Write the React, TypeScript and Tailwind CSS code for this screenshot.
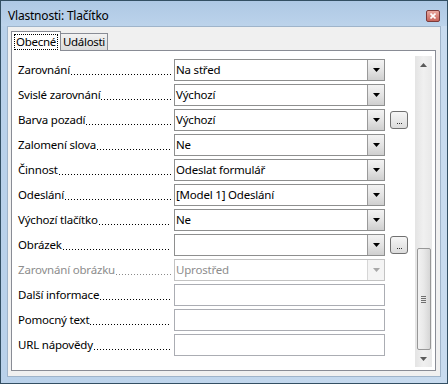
import React from 'react';

const font = { fontFamily: '"Segoe UI", "Noto Sans", "Open Sans", sans-serif' };

interface RowProps {
  label: string;
  kind: 'combo' | 'text';
  value?: string;
  disabled?: boolean;
  more?: boolean;
}

const rows: RowProps[] = [
  { label: 'Zarovnání', kind: 'combo', value: 'Na střed' },
  { label: 'Svislé zarovnání', kind: 'combo', value: 'Výchozí' },
  { label: 'Barva pozadí', kind: 'combo', value: 'Výchozí', more: true },
  { label: 'Zalomení slova', kind: 'combo', value: 'Ne' },
  { label: 'Činnost', kind: 'combo', value: 'Odeslat formulář' },
  { label: 'Odeslání', kind: 'combo', value: '[Model 1] Odeslání' },
  { label: 'Výchozí tlačítko', kind: 'combo', value: 'Ne' },
  { label: 'Obrázek', kind: 'combo', value: '', more: true },
  { label: 'Zarovnání obrázku', kind: 'combo', value: 'Uprostřed', disabled: true },
  { label: 'Další informace', kind: 'text' },
  { label: 'Pomocný text', kind: 'text' },
  { label: 'URL nápovědy', kind: 'text' },
];

function Arrow({ disabled }: { disabled?: boolean }) {
  return (
    <svg width="7" height="4" viewBox="0 0 7 4">
      <path d="M0 0 H7 L3.5 4 Z" fill={disabled ? '#a8a8a8' : '#000'} />
    </svg>
  );
}

function Row({ label, kind, value, disabled, more }: RowProps) {
  return (
    <div className="flex items-center h-[22px]">
      <div
        className={`w-[156px] pr-[3px] flex items-end text-[11.5px] tracking-[-0.2px] leading-[22px] whitespace-nowrap ${
          disabled ? 'text-[#8d8d8d]' : 'text-black'
        }`}
      >
        <span>{label}</span>
        {/* dot leader */}
        <div
          className={`flex-1 h-[1px] mb-[6px] ml-[1px] bg-repeat-x bg-[length:3px_1px] ${
            disabled
              ? 'bg-[linear-gradient(to_right,#8a8a8a_1px,transparent_1px)]'
              : 'bg-[linear-gradient(to_right,#000_1px,transparent_1px)]'
          }`}
        />
      </div>
      {kind === 'combo' ? (
        <div
          className={`w-[211px] h-[22px] flex items-center bg-white border ${
            disabled ? 'border-[#c3c3c3]' : 'border-[#8e8f8f]'
          }`}
        >
          <div
            className={`flex-1 pl-[1px] text-[11.5px] tracking-[-0.2px] leading-[20px] whitespace-nowrap ${
              disabled ? 'text-[#8d8d8d]' : 'text-black'
            }`}
          >
            {value}
          </div>
          <div
            className={`w-[17px] h-[20px] flex items-center justify-center border-l ${
              disabled
                ? 'border-[#d6d6d6] bg-[#f4f4f4]'
                : 'border-[#9a9a9a] bg-gradient-to-b from-[#f3f3f3] via-[#e4e4e4] to-[#cfcfcf]'
            }`}
          >
            <Arrow disabled={disabled} />
          </div>
        </div>
      ) : (
        <div className="w-[211px] h-[22px] bg-white border border-[#abadb3]" />
      )}
      {more && (
        <div className="ml-[5px] w-[18px] h-[18px] rounded-[3px] border border-[#707070] bg-gradient-to-b from-[#f6f6f6] to-[#dcdcdc] flex items-end justify-center pb-[4px]">
          <div className="flex gap-[1px]">
            <div className="w-[1px] h-[1px] bg-[#333]" />
            <div className="w-[1px] h-[1px] bg-[#333]" />
            <div className="w-[1px] h-[1px] bg-[#333]" />
          </div>
        </div>
      )}
    </div>
  );
}

function ScrollBar() {
  return (
    <div className="w-[17px] mt-[5px] mb-[3px] bg-gradient-to-r from-[#e4e4e4] via-[#f0f0f0] to-[#e8e8e8] flex flex-col items-center">
      <div className="h-[17px] flex items-center justify-center">
        <svg width="7" height="4" viewBox="0 0 7 4">
          <path d="M3.5 0 L7 4 H0 Z" fill="#5a5a5a" />
        </svg>
      </div>
      <div className="flex-1" />
      <div className="w-[14px] h-[102px] rounded-[2px] border border-[#979797] bg-gradient-to-r from-[#f2f2f2] via-[#e8e8e8] to-[#d6d6d6] flex flex-col items-center justify-center gap-[1px]">
        <div className="w-[5px] h-[1px] bg-[#6f6f6f]" />
        <div className="w-[5px] h-[1px] bg-[#6f6f6f]" />
        <div className="w-[5px] h-[1px] bg-[#6f6f6f]" />
        <div className="w-[5px] h-[1px] bg-[#6f6f6f]" />
      </div>
      <div className="h-[17px] flex items-center justify-center">
        <svg width="7" height="4" viewBox="0 0 7 4">
          <path d="M0 0 H7 L3.5 4 Z" fill="#5a5a5a" />
        </svg>
      </div>
    </div>
  );
}

export default function App() {
  return (
    <div
      className="w-[448px] h-[384px] border border-[#334f63] bg-gradient-to-r from-[#b9d1ea] to-[#c8dbef] flex flex-col"
      style={font}
    >
      {/* Title bar */}
      <div className="h-[25px] flex items-center pl-[7px] pr-[7px] bg-gradient-to-b from-[#aec8e4] to-[#bcd3eb]">
        <span className="text-[12px] tracking-[-0.2px] text-black pt-[4px]">Vlastnosti: Tlačítko</span>
        <div className="ml-auto mt-[4px] w-[14px] h-[12px] rounded-[2px] border border-[#7b3a3a] bg-gradient-to-b from-[#e8a8a0] to-[#c7655c] flex items-center justify-center">
          <svg width="6" height="6" viewBox="0 0 6 6">
            <path d="M0.5 0.5 L5.5 5.5 M5.5 0.5 L0.5 5.5" stroke="#fff" strokeWidth="1.6" />
          </svg>
        </div>
      </div>

      {/* Client area */}
      <div className="ml-[6px] w-[434px] h-[351px] border border-[#9fb4ca] bg-[#f0f0f0] pl-[3px] pt-[4px] flex flex-col">
        {/* Tabs */}
        <div className="flex items-end h-[19px]">
          <div className="relative z-10 -mb-px h-[20px] w-[50px] bg-white border border-b-0 border-[#898c95] flex items-start justify-center pt-[2px]">
            <span className="text-[11.5px] tracking-[-0.3px] leading-[14px] px-[1px] border border-dotted border-black">
              Obecné
            </span>
          </div>
          <div className="h-[17px] w-[47px] border border-l-0 border-b-0 border-[#898c95] bg-gradient-to-b from-[#f2f2f2] to-[#dcdcdc] flex items-center justify-center">
            <span className="text-[11.5px] tracking-[-0.3px] leading-[14px]">Události</span>
          </div>
        </div>

        {/* Panel */}
        <div className="w-[425px] h-[321px] border border-[#898c95] bg-white flex">
          <div className="w-[403px] pl-[6px] pt-[8px] flex flex-col gap-[3px]">
            {rows.map((r) => (
              <Row key={r.label} {...r} />
            ))}
          </div>
          <ScrollBar />
        </div>
      </div>
    </div>
  );
}
